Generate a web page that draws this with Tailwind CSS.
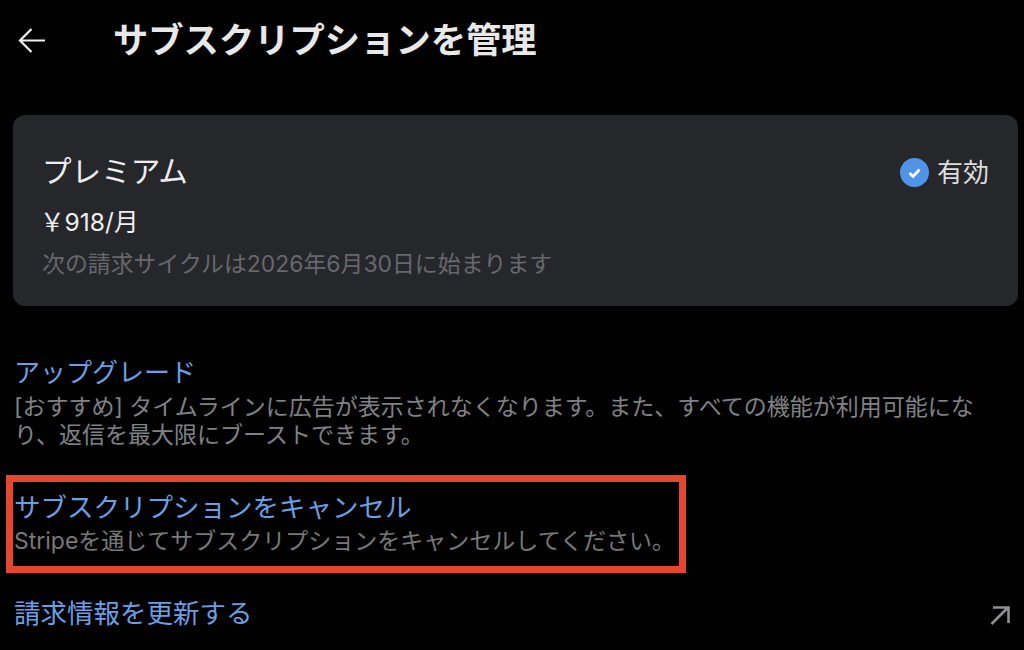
<!DOCTYPE html>
<html lang="ja"><head><meta charset="utf-8"><script src="https://cdn.jsdelivr.net/npm/@tailwindcss/browser@4"></script></head>
<body class="w-[1024px] h-[650px] overflow-hidden bg-[#010101] font-['Inter','Noto_Sans_CJK_JP',sans-serif] text-[#eeeeef]">
<header class="flex items-center h-[80px] pl-[18px]">
<svg class="w-[27px] h-[25px]" viewBox="0 0 27 25" fill="none" stroke="#eeeeef" stroke-width="2.2"><path d="M27 12.5H2M13.5 1L2 12.5 13.5 24"/></svg>
<h1 class="ml-[68px] pt-[2px] text-[35.3px] font-bold leading-none text-[#e8e8e9]">サブスクリプションを管理</h1>
</header>
<section class="mt-[35px] mx-[13px] h-[191px] w-[1005px] rounded-[12px] bg-[#26272b] pl-[29px] pr-[29px] pt-[40px]">
<div class="flex justify-between items-center h-[34px]"><div class="text-[29.6px] leading-none">プレミアム</div><div class="flex items-center gap-[8px] text-[26px] text-[#dcdcdd]"><svg class="w-[29px] h-[29px]" viewBox="0 0 29 29"><circle cx="14.5" cy="14.5" r="14.5" fill="#4f94e6"/><path d="M9.5 15l3.5 3.5 6.5-7" fill="none" stroke="#fff" stroke-width="2.8"/></svg>有効</div></div>
<div class="mt-[17px] -ml-[2px] text-[24.6px] leading-[32px]">￥918/月</div>
<div class="mt-[11px] text-[22.9px] leading-[30px] text-[#66686c]">次の請求サイクルは2026年6月30日に始まります</div>
</section>
<section class="mt-[49px] pl-[14px]">
<div class="text-[26px] leading-[36px] text-[#6a9fe4]">アップグレード</div>
<p class="mt-[2px] w-[965px] text-[23px] leading-[28px] text-[#808184]">[おすすめ] タイムラインに広告が表示されなくなります。また、すべての機能が利用可能になり、返信を最大限にブーストできます。</p>
</section>
<section class="relative mt-[40px] pl-[14px]">
<div class="absolute left-[6px] top-[-14px] w-[680px] h-[98px] border-[7px] border-[#e4462f]"></div>
<div class="text-[26.5px] leading-[36px] text-[#6a9fe4]">サブスクリプションをキャンセル</div>
<p class="mt-[2px] text-[23px] leading-[28px] text-[#77787a]">Stripeを通じてサブスクリプションをキャンセルしてください。</p>
</section>
<section class="mt-[40px] pl-[14px] pr-[14px] flex justify-between items-center">
<div class="text-[26.5px] leading-[36px] text-[#6a9fe4]">請求情報を更新する</div>
<svg class="w-[20px] h-[20px] mt-[4px]" viewBox="0 0 20 20" fill="none" stroke="#8f9092" stroke-width="2.6"><path d="M1.5 19L18 2.5M3 2.5h15.5V18"/></svg>
</section>
</body></html>
